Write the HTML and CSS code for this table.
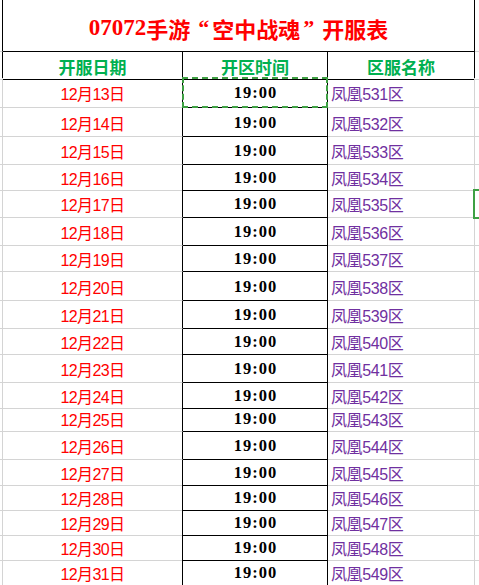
FILE: index.html
```html
<!DOCTYPE html>
<html lang="zh-CN">
<head>
<meta charset="utf-8">
<title>07072手游“空中战魂”开服表</title>
<link rel="stylesheet" href="styles.css">
</head>
<body>
<div class="sheet">
  <div class="row title-row">
    <div class="c sp bk"></div>
    <div class="c title"><span class="num">07072</span>手游<span class="q ql">“</span>空中战魂<span class="q qr">”</span>开服表</div>
    <div class="c ex"></div>
  </div>
  <div class="row head-row">
    <div class="c sp bk"></div>
    <div class="c th">开服日期</div>
    <div class="c th">开区时间</div>
    <div class="c th">区服名称</div>
    <div class="c ex"></div>
  </div>
  <div class="row h30"><div class="c sp"></div><div class="c date">12月13日</div><div class="c time sel">19:00<span class="marquee"></span></div><div class="c zone">凤凰531区</div><div class="c ex"></div></div>
  <div class="row h29"><div class="c sp"></div><div class="c date">12月14日</div><div class="c time">19:00</div><div class="c zone">凤凰532区</div><div class="c ex"></div></div>
  <div class="row h28"><div class="c sp"></div><div class="c date">12月15日</div><div class="c time">19:00</div><div class="c zone">凤凰533区</div><div class="c ex"></div></div>
  <div class="row h25"><div class="c sp"></div><div class="c date">12月16日</div><div class="c time">19:00</div><div class="c zone">凤凰534区</div><div class="c ex"></div></div>
  <div class="row h28"><div class="c sp"></div><div class="c date">12月17日</div><div class="c time">19:00</div><div class="c zone">凤凰535区</div><div class="c ex"><span class="cursor"></span></div></div>
  <div class="row h28"><div class="c sp"></div><div class="c date">12月18日</div><div class="c time">19:00</div><div class="c zone">凤凰536区</div><div class="c ex"></div></div>
  <div class="row h26"><div class="c sp"></div><div class="c date">12月19日</div><div class="c time">19:00</div><div class="c zone">凤凰537区</div><div class="c ex"></div></div>
  <div class="row h29"><div class="c sp"></div><div class="c date">12月20日</div><div class="c time">19:00</div><div class="c zone">凤凰538区</div><div class="c ex"></div></div>
  <div class="row h28"><div class="c sp"></div><div class="c date">12月21日</div><div class="c time">19:00</div><div class="c zone">凤凰539区</div><div class="c ex"></div></div>
  <div class="row h25"><div class="c sp"></div><div class="c date">12月22日</div><div class="c time">19:00</div><div class="c zone">凤凰540区</div><div class="c ex"></div></div>
  <div class="row h29"><div class="c sp"></div><div class="c date">12月23日</div><div class="c time">19:00</div><div class="c zone">凤凰541区</div><div class="c ex"></div></div>
  <div class="row h23"><div class="c sp"></div><div class="c date">12月24日</div><div class="c time">19:00</div><div class="c zone">凤凰542区</div><div class="c ex"></div></div>
  <div class="row h26"><div class="c sp"></div><div class="c date">12月25日</div><div class="c time">19:00</div><div class="c zone">凤凰543区</div><div class="c ex"></div></div>
  <div class="row h28"><div class="c sp"></div><div class="c date">12月26日</div><div class="c time">19:00</div><div class="c zone">凤凰544区</div><div class="c ex"></div></div>
  <div class="row h25"><div class="c sp"></div><div class="c date">12月27日</div><div class="c time">19:00</div><div class="c zone">凤凰545区</div><div class="c ex"></div></div>
  <div class="row h25"><div class="c sp"></div><div class="c date">12月28日</div><div class="c time">19:00</div><div class="c zone">凤凰546区</div><div class="c ex"></div></div>
  <div class="row h25"><div class="c sp"></div><div class="c date">12月29日</div><div class="c time">19:00</div><div class="c zone">凤凰547区</div><div class="c ex"></div></div>
  <div class="row h25"><div class="c sp"></div><div class="c date">12月30日</div><div class="c time">19:00</div><div class="c zone">凤凰548区</div><div class="c ex"></div></div>
  <div class="row h25"><div class="c sp"></div><div class="c date">12月31日</div><div class="c time">19:00</div><div class="c zone">凤凰549区</div><div class="c ex"></div></div>
</div>
</body>
</html>
```
FILE: styles.css
```css
html, body {
  margin: 0;
  padding: 0;
  background: #ffffff;
}
body {
  font-family: "Liberation Sans", "Noto Sans CJK SC", sans-serif;
  font-size: 16px;
}
.sheet {
  width: 479px;
  height: 585px;
  overflow: hidden;
  position: relative;
}
.row {
  display: grid;
  grid-template-columns: 3px 180px 145px 147px 1fr;
}
.c {
  box-sizing: border-box;
  border-right: 1px solid #d4d4d4;
  border-bottom: 1px solid #d4d4d4;
  display: flex;
  align-items: center;
  justify-content: center;
  white-space: nowrap;
  min-width: 0;
}
.c.ex {
  border-right: none;
  position: relative;
}
.c.bk {
  border-right-color: #000;
}
.title-row {
  height: 52px;
}
.title {
  grid-column: 2 / 5;
  border-right: 1px solid #000;
  border-bottom: 1px solid #000;
  color: #ff0000;
  font-weight: bold;
  font-size: 22px;
  font-family: "Noto Sans CJK SC", sans-serif;
  padding-top: 4px;
}
.title .num {
  font-family: "Liberation Serif", serif;
  font-size: 23px;
}
.title .q {
  display: inline-block;
  width: 22px;
  font-family: "Liberation Serif", serif;
}
.title .ql {
  text-align: right;
  padding-right: 3px;
  box-sizing: border-box;
}
.title .qr {
  text-align: left;
  padding-left: 3px;
  box-sizing: border-box;
}
.head-row {
  height: 26px;
}
.th {
  border-right-color: #000;
  border-bottom-color: #000;
  color: #00b050;
  font-weight: bold;
  font-size: 17px;
  font-family: "Noto Sans CJK SC", sans-serif;
  padding-top: 2px;
}
.h23 { height: 23px; }
.h25 { height: 25px; }
.h26 { height: 26px; }
.h28 { height: 28px; }
.h29 { height: 29px; }
.h30 { height: 30px; }
.date {
  color: #ff0000;
  border-right-color: #000;
  padding-top: 1px;
  letter-spacing: -0.6px;
}
.time {
  border-right-color: #000;
  border-bottom-color: #000;
  font-family: "Liberation Serif", "Noto Sans CJK SC", serif;
  font-weight: bold;
  font-size: 16.5px;
  letter-spacing: 1px;
  padding-left: 1px;
  padding-top: 1px;
}
.time.sel {
  position: relative;
}
.marquee {
  position: absolute;
  left: -1px;
  top: -1px;
  width: 146px;
  height: 31px;
  box-sizing: border-box;
  border: 2px dashed #3ea043;
  z-index: 2;
}
.zone {
  color: #7030a0;
  justify-content: flex-start;
  padding-left: 3px;
  padding-top: 1px;
  letter-spacing: -0.4px;
}
.cursor {
  position: absolute;
  left: -2px;
  top: -1px;
  width: 40px;
  height: 30px;
  box-sizing: border-box;
  border: 2px solid #3ea043;
  z-index: 2;
}
```
